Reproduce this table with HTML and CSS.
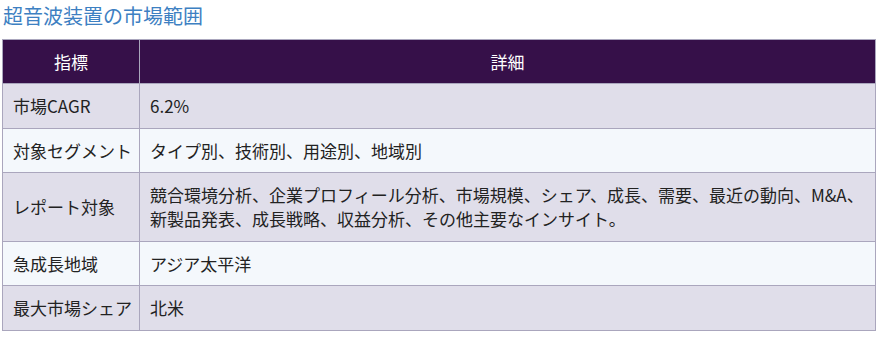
FILE: index.html
```html
<!DOCTYPE html>
<html lang="ja">
<head>
<meta charset="utf-8">
<title>超音波装置の市場範囲</title>
<link rel="stylesheet" href="styles.css">
</head>
<body>
<div class="page">
  <h2 class="title">超音波装置の市場範囲</h2>
  <table class="scope">
    <thead>
      <tr><th class="col-key">指標</th><th>詳細</th></tr>
    </thead>
    <tbody>
      <tr class="odd"><td>市場CAGR</td><td>6.2%</td></tr>
      <tr class="even"><td>対象セグメント</td><td>タイプ別、技術別、用途別、地域別</td></tr>
      <tr class="odd"><td>レポート対象</td><td>競合環境分析、企業プロフィール分析、市場規模、シェア、成長、需要、最近の動向、M&amp;A、新製品発表、成長戦略、収益分析、その他主要なインサイト。</td></tr>
      <tr class="even"><td>急成長地域</td><td>アジア太平洋</td></tr>
      <tr class="odd"><td>最大市場シェア</td><td>北米</td></tr>
    </tbody>
  </table>
</div>
</body>
</html>
```
FILE: styles.css
```css
html, body {
  margin: 0;
  padding: 0;
  background: #ffffff;
}
body {
  font-family: "Noto Sans CJK JP", "Noto Sans", sans-serif;
  color: #222222;
}
.page {
  padding: 0 7px 0 2px;
}
.title {
  margin: 0;
  padding: 2px 0 0 1px;
  height: 39px;
  box-sizing: border-box;
  font-size: 20px;
  line-height: 28px;
  font-weight: normal;
  color: #3d80c2;
}
.scope {
  width: 874px;
  border-collapse: collapse;
  border: 1px solid #a8a3ba;
  font-size: 17px;
  line-height: 24px;
}
.scope th,
.scope td {
  border: 1px solid #aaa6bd;
  padding: 10px 2px 9.5px 10px;
  text-align: left;
  vertical-align: middle;
}
.scope th {
  background: #361049;
  color: #ffffff;
  font-weight: normal;
  text-align: center;
  padding: 10px 10px 9px;
}
.scope .col-key {
  width: 116px;
}
.scope td:first-child {
  white-space: nowrap;
  padding-right: 6px;
}
.scope tr.odd td {
  background: #e0deea;
}
.scope tr.even td {
  background: #f4f8fc;
}
```
